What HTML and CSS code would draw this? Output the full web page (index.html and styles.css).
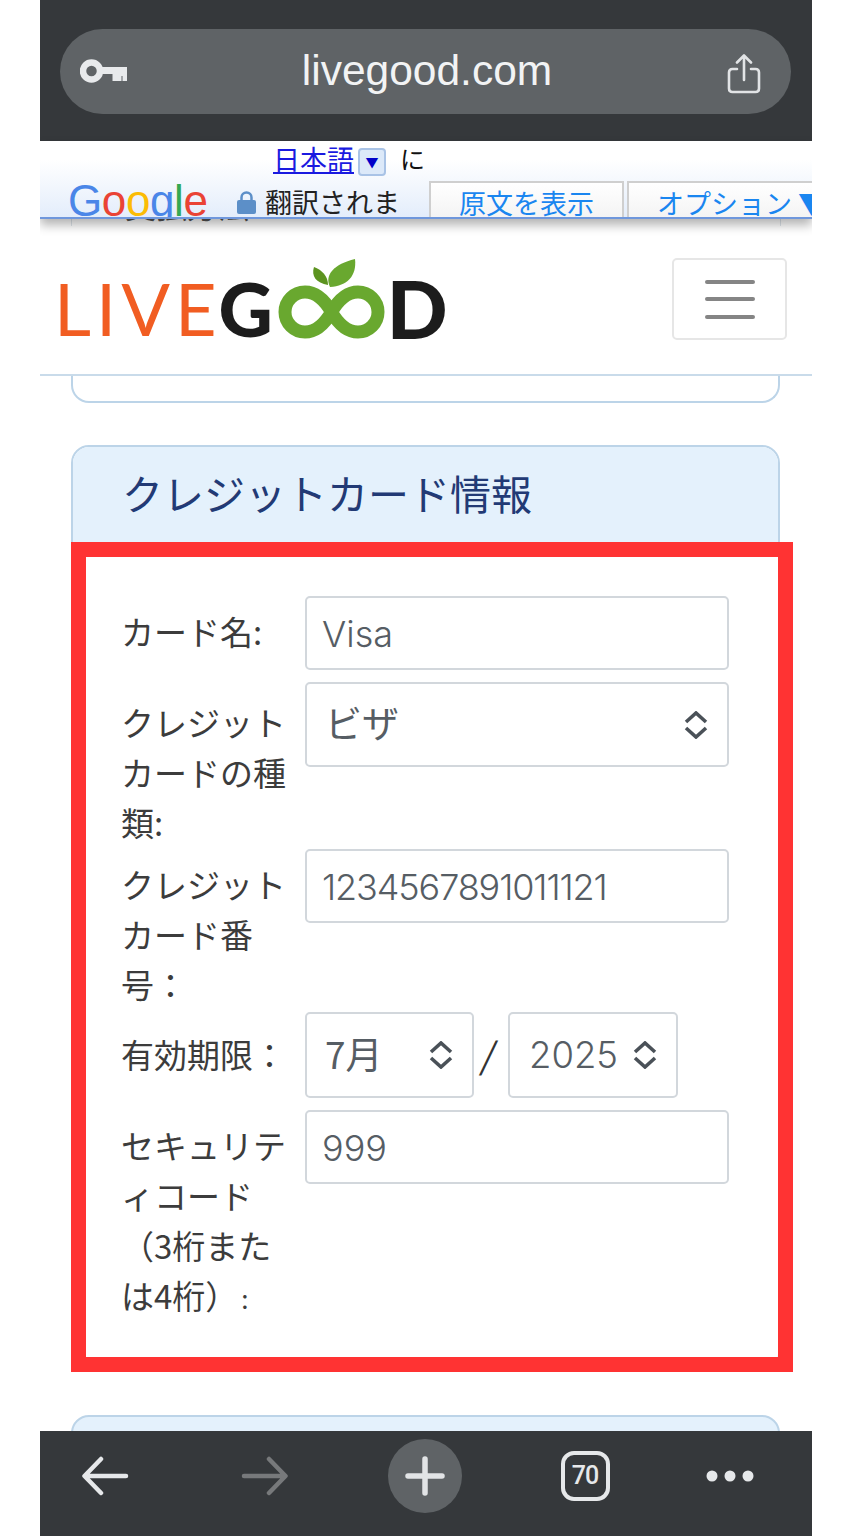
FILE: index.html
```html
<!DOCTYPE html>
<html lang="ja">
<head>
<meta charset="utf-8">
<title>LiveGood</title>
<link rel="stylesheet" href="styles.css">
</head>
<body>
<div class="screen">
  <header class="topbar">
    <div class="pill">
      <svg class="key" viewBox="0 0 47 24"><circle cx="11.500" cy="12" r="8.500" fill="none" stroke="#e8eaec" stroke-width="6.500"/><path d="M20 8H47V22H42.500V17H41.500V22H32.500V15H20Z" fill="#e8eaec"/></svg>
      <span class="url">livegood.com</span>
      <svg class="share" viewBox="0 0 34 40"><path d="M10 15H5.500Q2 15 2 18.500V34.500Q2 38 5.500 38H28.500Q32 38 32 34.500V18.500Q32 15 28.500 15H24M17 26V2M10 8.500L17 1.500L24 8.500" fill="none" stroke="#e2e4e6" stroke-width="2.600" stroke-linecap="round" stroke-linejoin="round"/></svg>
    </div>
  </header>

  <div class="translate">
    <div class="tr-row1">
      <a class="tr-lang">日本語</a><span class="tr-arrow">▼</span><span class="tr-ni">に</span>
    </div>
    <div class="tr-row2">
      <span class="google"><span class="g-b">G</span><span class="g-r">o</span><span class="g-y">o</span><span class="g-b">g</span><span class="g-g">l</span><span class="g-r">e</span></span>
      <svg class="lock" viewBox="0 0 19 23"><path d="M4.500 10V6.500a5 5 0 0 1 10 0V10" fill="none" stroke="#5c8fc8" stroke-width="2.500"/><rect y="9" width="19" height="14" rx="2" fill="#5c8fc8"/></svg>
      <span class="tr-done">翻訳されま</span>
      <span class="tr-btn tr-btn-first">原文を表示</span>
      <span class="tr-btn">オプション ▼</span>
    </div>
  </div>

  <div class="peek"><span class="peek-text">支払方法</span></div>
  <nav class="nav">
    <div class="logo">
      <span class="logo-live">LIVE</span><span class="logo-bold">G</span>
      <svg class="logo-mark" viewBox="0 0 107 80">
        <path d="M53.500 53C46 40 38 33 27 33A20 20 0 0 0 27 73C38 73 46 66 53.500 53C61 40 69 33 80 33A20 20 0 0 1 80 73C69 73 61 66 53.500 53Z" fill="none" stroke="#69a82f" stroke-width="13"/>
        <path d="M50 26C38 24 33 17 36 8C44 11 50 17 50 26Z" fill="#5c931f"/>
        <path d="M52 28C46 16 56 5 77 0C79 17 69 27 52 28Z" fill="#69a82f"/>
      </svg>
      <span class="logo-bold logo-d">D</span>
    </div>
    <button class="burger" type="button"><span></span><span></span><span></span></button>
  </nav>

  <main class="content">
    <div class="card-tail"></div>

    <section class="card">
      <h2 class="card-head">クレジットカード情報</h2>
      <div class="card-body">
        <div class="row">
          <div class="label">カード名:</div>
          <div class="field">Visa</div>
        </div>
        <div class="row">
          <div class="label label-sel">クレジット<br>カードの種<br>類:</div>
          <div class="select select-wide"><span class="ja-val">ビザ</span>
            <svg class="updown" viewBox="0 0 24 28"><path d="M2 11L12 2L22 11M2 17L12 26L22 17" fill="none" stroke="#4a5158" stroke-width="3.600"/></svg>
          </div>
        </div>
        <div class="row">
          <div class="label label-num">クレジット<br>カード番<br>号：</div>
          <div class="field field-num">1234567891011121</div>
        </div>
        <div class="row">
          <div class="label label-date">有効期限：</div>
          <div class="date">
            <div class="select select-month"><span class="ja-val">7月</span>
              <svg class="updown" viewBox="0 0 24 28"><path d="M2 11L12 2L22 11M2 17L12 26L22 17" fill="none" stroke="#4a5158" stroke-width="3.600"/></svg>
            </div>
            <span class="slash">/</span>
            <div class="select select-year"><span>2025</span>
              <svg class="updown" viewBox="0 0 24 28"><path d="M2 11L12 2L22 11M2 17L12 26L22 17" fill="none" stroke="#4a5158" stroke-width="3.600"/></svg>
            </div>
          </div>
        </div>
        <div class="row">
          <div class="label">セキュリテ<br>ィコード<br>（3桁また<br>は4桁）<span class="colon-end">:</span></div>
          <div class="field">999</div>
        </div>
      </div>
      <div class="highlight"></div>
    </section>

    <section class="card card-next"></section>
  </main>

  <footer class="bottombar">
    <div class="bb-cell">
      <svg width="48" height="40" viewBox="0 0 48 40"><path d="M45 20H4M20 3L3.500 20L20 37" fill="none" stroke="#e6e8ea" stroke-width="4.500" stroke-linecap="round" stroke-linejoin="round"/></svg>
    </div>
    <div class="bb-cell">
      <svg width="48" height="40" viewBox="0 0 48 40"><path d="M3 20H44M28 3L44.500 20L28 37" fill="none" stroke="#77797b" stroke-width="4.500" stroke-linecap="round" stroke-linejoin="round"/></svg>
    </div>
    <div class="bb-cell">
      <span class="plus"><svg width="40" height="40" viewBox="0 0 40 40"><path d="M20 3V37M3 20H37" fill="none" stroke="#e2e4e6" stroke-width="5.500" stroke-linecap="round"/></svg></span>
    </div>
    <div class="bb-cell"><span class="tabs">70</span></div>
    <div class="bb-cell bb-more">
      <svg width="48" height="12" viewBox="0 0 48 12"><circle cx="6" cy="6" r="5.500" fill="#e6e8ea"/><circle cx="24" cy="6" r="5.500" fill="#e6e8ea"/><circle cx="42" cy="6" r="5.500" fill="#e6e8ea"/></svg>
    </div>
  </footer>
</div>
</body>
</html>
```
FILE: styles.css
```css
* { box-sizing: border-box; }
html, body { margin: 0; padding: 0; background: #fff; }
body { width: 864px; height: 1536px; overflow: hidden; font-family: "Noto Sans CJK JP", "Liberation Sans", sans-serif; }
.screen { width: 772px; height: 1536px; margin-left: 40px; display: flex; flex-direction: column; overflow: hidden; background: #fff; }

/* browser top bar */
.topbar { height: 141px; flex: none; background: #35383b; padding: 29px 21px 0 20px; }
.pill { height: 85px; border-radius: 43px; background: #5f6366; display: flex; align-items: center; justify-content: space-between; padding: 0 30px 0 20px; position: relative; }
.key { width: 47px; height: 24px; margin-top: -1px; }
.share { width: 34px; height: 40px; margin-top: 4px; }
.url { font-family: "Liberation Sans", sans-serif; font-size: 42.500px; color: #f2f3f4; line-height: 1; margin-top: 0; }

/* translate bar */
.translate { height: 78px; flex: none; position: relative; z-index: 2; background: linear-gradient(#ffffff 25%, #e3edfb 100%); border-bottom: 2px solid #6f97dc; box-shadow: 0 6px 10px rgba(0,0,0,.3); }
.tr-row1 { height: 40px; display: flex; align-items: center; padding-left: 233px; font-size: 27px; line-height: 40px; margin-top: -2px; margin-bottom: 2px; }
.tr-lang { color: #1a1ae0; text-decoration: underline; }
.tr-arrow { width: 28px; height: 28px; margin-left: 4px; margin-top: 6px; border: 2px solid #a9c3e6; border-radius: 4px; background: #dce9f9; color: #0000c8; font-size: 13px; line-height: 24px; text-align: center; }
.tr-ni { margin-left: 14px; font-size: 25px; color: #111; margin-top: -2px; }
.tr-row2 { height: 36px; display: flex; align-items: flex-end; overflow: hidden; position: relative; white-space: nowrap; padding-left: 28px; }
.google { font-family: "Liberation Sans", sans-serif; font-size: 44px; line-height: 42px; width: 169px; flex: none; letter-spacing: -.4px; align-self: flex-start; margin-top: -1px; }
.g-b { color: #4a86e8; } .g-r { color: #ea4335; } .g-y { color: #fbbc05; } .g-g { color: #34a853; }
.lock { width: 19px; height: 23px; flex: none; margin-bottom: 3px; }
.tr-done { width: 164px; flex: none; margin-left: 9px; font-size: 27px; line-height: 36px; color: #222; position: relative; top: 3px; }
.tr-btn { flex: none; height: 36px; font-size: 27px; line-height: 40px; color: #1a86f0; background: linear-gradient(#fff, #f4f4f4); border: 2px solid #cfcfcf; border-bottom: 0; padding: 0 28px; margin-right: 3px; }
.tr-btn-first { width: 195px; }

/* site header */
.peek { height: 7px; flex: none; overflow: hidden; margin: 0 31px 0 31px; border-left: 1px solid #dfe6ec; border-right: 1px solid #dfe6ec; padding-left: 53px; font-size: 31px; color: #555; line-height: 7px; }
.peek-text { display: block; margin-top: -30px; line-height: 32px; }
.nav { height: 150px; flex: none; border-bottom: 2px solid #c9dbea; display: flex; align-items: flex-start; justify-content: space-between; padding: 32px 25px 0 14px; }
.logo { display: flex; align-items: flex-end; height: 81px; line-height: 1; }
.logo-live { font-family: Lato, sans-serif; font-weight: 400; font-size: 72px; line-height: 62px; letter-spacing: 5px; color: #f15d22; margin-right: -3px; }
.logo-bold { font-family: Lato, sans-serif; font-weight: 900; font-size: 75px; line-height: 62px; color: #1c1c1c; }
.logo-mark { width: 107px; height: 80px; margin-left: 5px; flex: none; }
.logo-d { margin-left: 2px; font-size: 80px; }
.burger { width: 115px; height: 82px; background: #fff; border: 2px solid #e6e6e6; border-radius: 5px; padding: 0; display: flex; flex-direction: column; align-items: center; justify-content: center; gap: 13.500px; }
.burger span { display: block; width: 50px; height: 4px; border-radius: 2px; background: #858585; }

/* page content */
.content { flex: 1; min-height: 0; overflow: hidden; padding: 0 32px 0 31px; display: flex; flex-direction: column; }
.card-tail { height: 27px; flex: none; border: 2px solid #bcd4e8; border-top: 0; border-radius: 0 0 18px 18px; margin-bottom: 42px; }
.card { flex: none; border: 2px solid #bcd4e8; border-radius: 18px; position: relative; margin-bottom: 43px; background: #fff; }
.card-head { margin: 0; height: 95px; background: #e4f1fc; border-radius: 16px 16px 0 0; padding-left: 49px; font-weight: 400; font-size: 41px; line-height: 91px; color: #223a75; white-space: nowrap; }
.card-body { padding: 54px 49px 50px 50px; }
.row { display: flex; align-items: flex-start; }
.label { width: 184px; flex: none; margin-left: -2px; padding-top: 10px; font-size: 33px; line-height: 50px; color: #3c3c3c; white-space: nowrap; }
.label-sel { padding-top: 15px; padding-bottom: 2px; }
.label-num { padding-bottom: 3px; }
.label-date { padding-top: 17px; }
.colon-end { margin-left: 3px; font-size: 26px; line-height: 1; }
.field, .select { border: 2px solid #d2d7dc; border-radius: 5px; background: #fff; color: #565d64; font-family: Inter, "Noto Sans CJK JP", sans-serif; font-weight: 300; font-size: 36px; }
.field { width: 424px; height: 74px; margin-bottom: 12px; line-height: 72px; padding-left: 15px; }
.field-num { letter-spacing: -1.100px; }
.select { height: 86px; display: flex; align-items: center; justify-content: space-between; font-size: 36.500px; }
.select-wide { width: 424px; height: 85px; padding: 0 19px 6px 18px; }
.ja-val { font-family: "Noto Sans CJK JP", sans-serif; font-weight: 400; font-size: 37px; }
.select-wide .updown { margin-top: 6px; }
.date { display: flex; align-items: flex-start; margin-bottom: 12px; }
.select-month { width: 169px; padding: 0 19px 4px 18px; }
.select-year { width: 170px; padding: 0 19px 0 19px; }
.select-month .updown { margin-top: 4px; }
.slash { width: 34px; flex: none; padding-right: 4px; font-family: Inter, sans-serif; font-weight: 300; font-size: 40px; line-height: 90px; height: 86px; color: #333; text-align: center; transform: skewX(-12deg); }
.updown { width: 24px; height: 28px; flex: none; }
.highlight { position: absolute; left: -2px; right: -15px; top: 95px; bottom: -2px; border: 15px solid #ff3333; pointer-events: none; }
.card-next { height: 97px; background: #e4f1fc; }

/* browser bottom bar */
.bottombar { height: 105px; flex: none; background: #35383b; display: flex; align-items: center; padding: 0 0 15px 15px; gap: 60px; position: relative; z-index: 3; }
.bb-cell { width: 100px; flex: none; display: flex; align-items: center; justify-content: center; }
.bb-more { margin-left: -15px; }
.plus { width: 74px; height: 74px; border-radius: 50%; background: #5f6366; display: flex; align-items: center; justify-content: center; }
.tabs { width: 49px; height: 50px; border: 4px solid #e6e8ea; border-radius: 13px; color: #e6e8ea; font-family: Roboto, sans-serif; font-size: 25px; font-weight: 500; line-height: 42px; text-align: center; letter-spacing: -1px; }
```
